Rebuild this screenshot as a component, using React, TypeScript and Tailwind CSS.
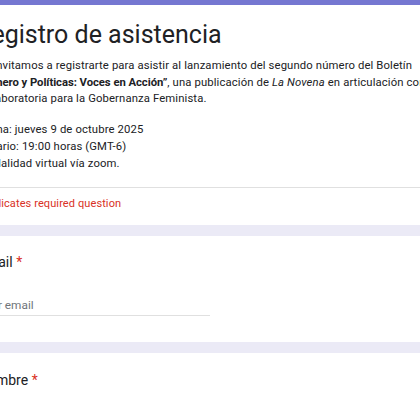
export default function App() {
  return (
    <div className="min-h-[420px] w-[420px] overflow-hidden bg-[#ebeaf6] font-['Roboto',sans-serif] text-[#202124]">
      <div className="-ml-[46px] flex w-[720px] flex-col gap-[11px]">
        {/* header card */}
        <div className="rounded-b-lg border-t-[5px] border-[#7577d1] bg-white">
          <div className="pl-6 pr-6 pt-[14px]">
            <h1 className="-ml-[2px] text-[25px] leading-[32px]">Registro de asistencia</h1>
            <div className="mt-[7px] text-[11.3px] leading-[16.7px] tracking-[0.12px]">
              <p>
                Te invitamos a registrarte para asistir al lanzamiento del segundo número del Boletín
                <br />
                <b className="font-bold tracking-[-0.05px]">“Género y Políticas: Voces en Acción”</b>, una publicación de{' '}
                <i>La Novena</i> en articulación con
                <br />
                Colaboratoria para la Gobernanza Feminista.
              </p>
              <p className="mt-[14px]">
                Fecha: jueves 9 de octubre 2025
                <br />
                Horario: 19:00 horas (GMT-6)
                <br />
                Modalidad virtual vía zoom.
              </p>
            </div>
          </div>
          <div className="mt-[15px] border-t border-[#e0e0e0] pl-6 pb-[13px] pt-[8px] text-[11px] leading-[16px] tracking-[0.1px] text-[#d93025]">
            * Indicates required question
          </div>
        </div>

        {/* email */}
        <div className="rounded-lg bg-white pl-6 pt-[16px] pb-[26px]">
          <div className="text-[14px] leading-[20px]">
            Email <span className="text-[#d93025]">*</span>
          </div>
          <div className="mt-[24px] w-[232px] border-b border-[#e0e0e0] pb-[1px] text-[11.8px] leading-[18px] text-[#70757a]">
            Your email
          </div>
        </div>

        {/* nombre */}
        <div className="h-[120px] rounded-lg bg-white pl-6 pt-[17px]">
          <div className="text-[14px] leading-[20px]">
            Nombre <span className="text-[#d93025]">*</span>
          </div>
        </div>
      </div>
    </div>
  );
}
